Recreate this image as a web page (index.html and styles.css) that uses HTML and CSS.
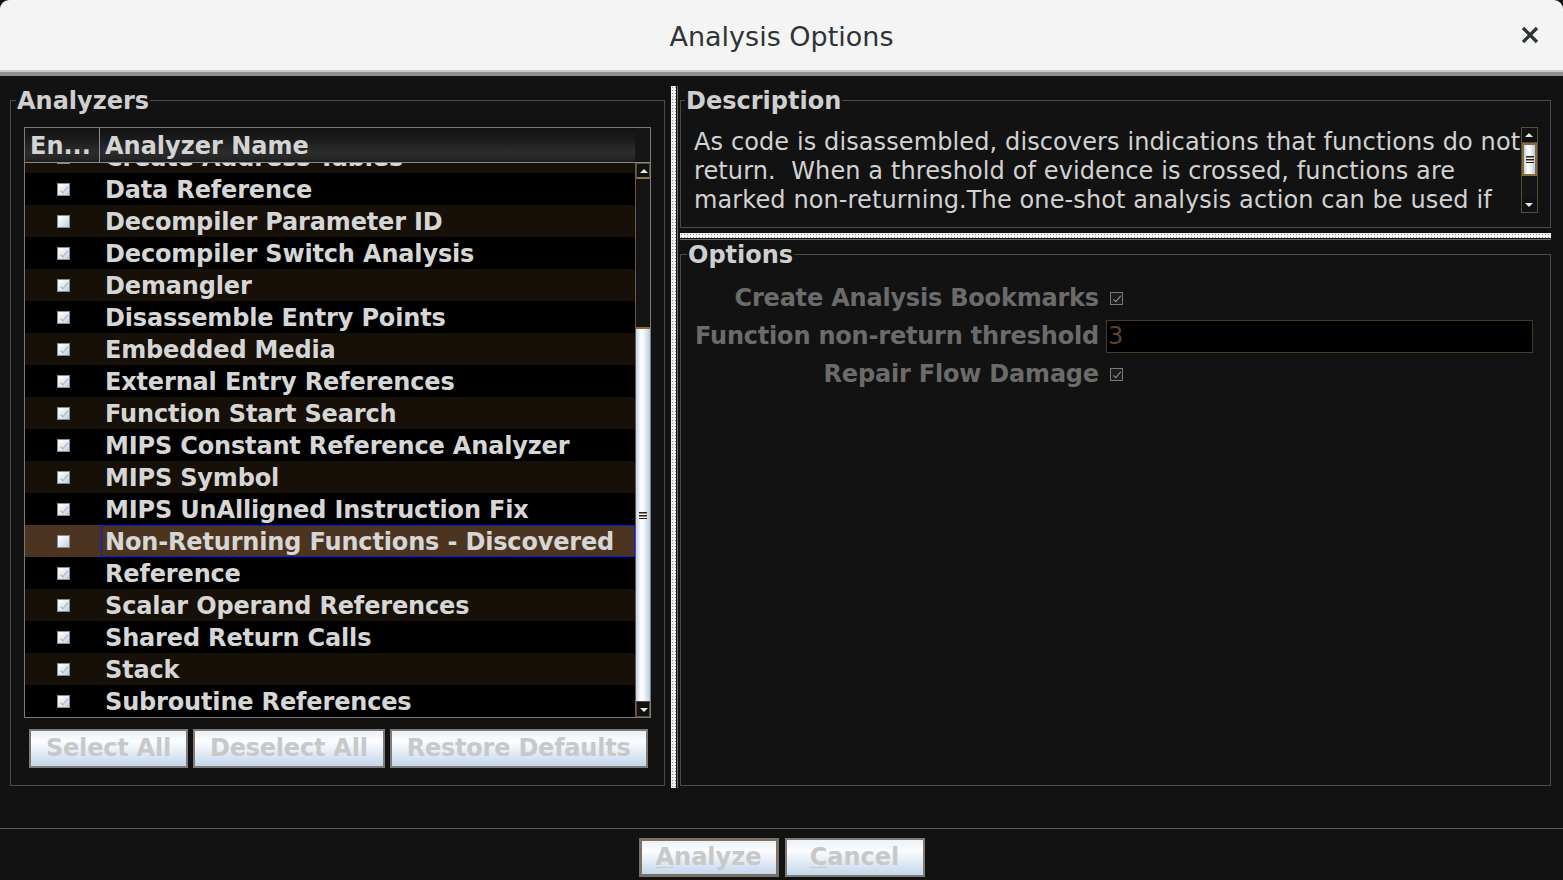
FILE: index.html
```html
<!DOCTYPE html>
<html lang="en">
<head>
<meta charset="utf-8">
<title>Analysis Options</title>
<link rel="stylesheet" href="styles.css">
</head>
<body>
<div class="dialog">
  <header class="titlebar">
    <span></span>
    <h1 class="title">Analysis Options</h1>
    <button class="close" aria-label="Close">
      <svg width="18" height="18" viewBox="0 0 18 18"><path d="M2 2 L16 16 M16 2 L2 16" stroke="#2e3436" stroke-width="3.2" fill="none"/></svg>
    </button>
  </header>

  <main class="content">
    <fieldset class="group analyzers">
      <legend>Analyzers</legend>
      <div class="table">
        <div class="thead">
          <div class="th th-en">En...</div>
          <div class="th th-name">Analyzer Name</div>
          <div class="th-corner"></div>
        </div>
        <div class="tbody">
          <div class="viewport">
            <div class="rows">
              <div class="row odd"><span class="cell-cb"><i class="cb on"></i></span><span class="cell-name">Create Address Tables</span></div>
              <div class="row"><span class="cell-cb"><i class="cb on"></i></span><span class="cell-name">Data Reference</span></div>
              <div class="row odd"><span class="cell-cb"><i class="cb"></i></span><span class="cell-name">Decompiler Parameter ID</span></div>
              <div class="row"><span class="cell-cb"><i class="cb on"></i></span><span class="cell-name">Decompiler Switch Analysis</span></div>
              <div class="row odd"><span class="cell-cb"><i class="cb on"></i></span><span class="cell-name">Demangler</span></div>
              <div class="row"><span class="cell-cb"><i class="cb on"></i></span><span class="cell-name">Disassemble Entry Points</span></div>
              <div class="row odd"><span class="cell-cb"><i class="cb on"></i></span><span class="cell-name">Embedded Media</span></div>
              <div class="row"><span class="cell-cb"><i class="cb on"></i></span><span class="cell-name">External Entry References</span></div>
              <div class="row odd"><span class="cell-cb"><i class="cb on"></i></span><span class="cell-name">Function Start Search</span></div>
              <div class="row"><span class="cell-cb"><i class="cb on"></i></span><span class="cell-name">MIPS Constant Reference Analyzer</span></div>
              <div class="row odd"><span class="cell-cb"><i class="cb on"></i></span><span class="cell-name">MIPS Symbol</span></div>
              <div class="row"><span class="cell-cb"><i class="cb on"></i></span><span class="cell-name">MIPS UnAlligned Instruction Fix</span></div>
              <div class="row selected"><span class="cell-cb"><i class="cb"></i></span><span class="cell-name">Non-Returning Functions - Discovered</span></div>
              <div class="row"><span class="cell-cb"><i class="cb on"></i></span><span class="cell-name">Reference</span></div>
              <div class="row odd"><span class="cell-cb"><i class="cb on"></i></span><span class="cell-name">Scalar Operand References</span></div>
              <div class="row"><span class="cell-cb"><i class="cb on"></i></span><span class="cell-name">Shared Return Calls</span></div>
              <div class="row odd"><span class="cell-cb"><i class="cb on"></i></span><span class="cell-name">Stack</span></div>
              <div class="row"><span class="cell-cb"><i class="cb on"></i></span><span class="cell-name">Subroutine References</span></div>
            </div>
          </div>
          <div class="vscroll">
            <div class="sb-btn up"></div>
            <div class="sb-track"><div class="sb-thumb"><span class="grip"></span></div></div>
            <div class="sb-btn down"></div>
          </div>
        </div>
      </div>
      <div class="btn-row">
        <button class="btn">Select All</button>
        <button class="btn">Deselect All</button>
        <button class="btn">Restore Defaults</button>
      </div>
    </fieldset>

    <div class="vsplit"><span class="dots"></span><span class="edge"></span></div>

    <div class="right">
      <fieldset class="group desc">
        <legend>Description</legend>
        <div class="textarea">
          <div class="desc-text">As code is disassembled, discovers indications that functions do not
return.  When a threshold of evidence is crossed, functions are
marked non-returning.The one-shot analysis action can be used if</div>
          <div class="vscroll small">
            <div class="sb-btn up"></div>
            <div class="sb-track"><div class="sb-thumb"><span class="grip"></span></div></div>
            <div class="sb-btn down"></div>
          </div>
        </div>
      </fieldset>

      <div class="hsplit"><span class="dots"></span><span class="edge"></span></div>

      <fieldset class="group options">
        <legend>Options</legend>
        <div class="opt-grid">
          <label class="opt-label">Create Analysis Bookmarks</label>
          <div class="opt-val"><i class="ocb"></i></div>
          <label class="opt-label">Function non-return threshold</label>
          <div class="opt-val"><div class="field">3</div></div>
          <label class="opt-label">Repair Flow Damage</label>
          <div class="opt-val"><i class="ocb"></i></div>
        </div>
      </fieldset>
    </div>
  </main>

  <footer class="footer">
    <button class="btn big default"><u>A</u>nalyze</button>
    <button class="btn big"><u>C</u>ancel</button>
  </footer>
</div>
</body>
</html>
```

FILE: styles.css
```css
* { box-sizing: border-box; }

html, body {
  margin: 0;
  padding: 0;
  background: #121212;
  width: 1563px;
  height: 880px;
  overflow: hidden;
  font-family: "DejaVu Sans", "Liberation Sans", sans-serif;
}

.dialog {
  display: flex;
  flex-direction: column;
  height: 880px;
}

/* ---------- title bar ---------- */
.titlebar {
  height: 76px;
  flex: none;
  background: #f4f4f4;
  border-radius: 9px 9px 0 0;
  border-bottom: 4px solid #8f8f8f;
  box-shadow: inset 0 -2px 0 #c9c9c9;
  display: grid;
  grid-template-columns: 1fr auto 1fr;
  align-items: center;
}
.title {
  margin: 0;
  font-size: 27px;
  font-weight: normal;
  color: #2e3436;
  line-height: 32px;
  padding-top: 2px;
}
.close {
  justify-self: end;
  margin-right: 24px;
  margin-bottom: 2px;
  width: 18px;
  height: 18px;
  padding: 0;
  border: 0;
  background: none;
  display: flex;
}

/* ---------- content ---------- */
.content {
  flex: 1;
  display: flex;
  padding: 10px 12px 0 10px;
  min-height: 0;
}

.group {
  margin: 0;
  min-width: 0;
  border: 1px solid #4a4a4a;
  border-radius: 0;
}
.group legend {
  padding: 3px 1px 1px 1px;
  margin-left: -8px;
  font-size: 24px;
  font-weight: bold;
  line-height: 24px;
  color: #cfcfcf;
}

.analyzers {
  width: 655px;
  height: 700px;
  padding: 13px 13px 17px 13px;
  display: flex;
  flex-direction: column;
}

/* table */
.table {
  width: 627px;
  border: 1px solid #7a7a7a;
  background: #000;
  display: flex;
  flex-direction: column;
}
.thead {
  height: 35px;
  display: grid;
  grid-template-columns: 75px 1fr 15px;
  border-bottom: 1px solid #8a8a8a;
  background: linear-gradient(#121212 0%, #1c1c1c 35%, #2c2c2c 70%, #262626 90%, #1a1a1a 100%);
}
.th {
  font-size: 24px;
  font-weight: bold;
  color: #d4d4d4;
  line-height: 32px;
  padding-top: 2px;
  padding-left: 5px;
  white-space: nowrap;
  overflow: hidden;
}
.th-en {
  border-right: 1px solid #8a8a8a;
}
.th-corner {
  background: #151515;
}

.tbody {
  height: 554px;
  display: flex;
}
.viewport {
  flex: 1;
  overflow: hidden;
}
.rows {
  margin-top: -22px;
}
.row {
  height: 32px;
  display: flex;
  background: #000;
}
.row.odd {
  background: #171008;
}
.row.selected {
  background: #4b3521;
}
.cell-cb {
  width: 76px;
  flex: none;
  display: flex;
  align-items: center;
  justify-content: center;
  padding-left: 1px;
}
.cell-name {
  flex: 1;
  font-size: 24px;
  font-weight: bold;
  letter-spacing: -0.16px;
  color: #d6d6d6;
  line-height: 28px;
  padding-top: 2px;
  padding-left: 3px;
  border: 1px solid transparent;
  white-space: nowrap;
}
.row.selected .cell-name {
  border-color: #1010ff;
}

/* table checkboxes */
.cb {
  display: block;
  width: 13px;
  height: 13px;
  border: 1px solid #8c8c8c;
  background: linear-gradient(135deg, #ffffff 0%, #e8eef6 45%, #b9cde2 100%);
  position: relative;
}
.cb.on::after {
  content: "";
  position: absolute;
  left: 4px;
  top: 1px;
  width: 3px;
  height: 7px;
  border-right: 1px solid #a9b2bc;
  border-bottom: 1px solid #a9b2bc;
  transform: rotate(40deg);
}

/* scrollbar */
.vscroll {
  width: 15px;
  flex: none;
  display: flex;
  flex-direction: column;
  background: #151515;
  border-left: 1px solid #6b5a42;
}
.sb-btn {
  height: 16px;
  flex: none;
  background: #111;
  border: 1px solid #5a4c38;
  position: relative;
}
.sb-btn.up { border-bottom: 2px solid #8a7250; }
.sb-btn::after {
  content: "";
  position: absolute;
  left: 3px;
  width: 0;
  height: 0;
  border-left: 4px solid transparent;
  border-right: 4px solid transparent;
}
.sb-btn.up::after {
  top: 5px;
  border-bottom: 4px solid #e6e6e6;
}
.sb-btn.down::after {
  top: 6px;
  border-top: 4px solid #e6e6e6;
}
.sb-track {
  flex: 1;
  display: flex;
  flex-direction: column;
  justify-content: flex-end;
  background: #141414;
}
.sb-thumb {
  height: 374px;
  border-top: 2px solid #8a6b35;
  background: linear-gradient(to right, #bfd1e4 0%, #ffffff 35%, #eef3f8 60%, #b7cbe0 100%);
  display: flex;
  align-items: center;
  justify-content: center;
}
.grip {
  display: block;
  width: 8px;
  height: 7px;
  background: repeating-linear-gradient(#222 0 1px, #a08850 1px 2px, transparent 2px 3px);
}

/* buttons */
.btn-row {
  display: flex;
  gap: 5px;
  margin-top: 11px;
  padding-left: 5px;
}
.btn {
  height: 39px;
  padding: 0 15px;
  font-family: "DejaVu Sans", sans-serif;
  font-size: 24px;
  font-weight: bold;
  letter-spacing: -0.22px;
  color: #c8c8c8;
  border: 2px solid #7e7b76;
  background: linear-gradient(#eaf1f8 0%, #fbfdff 30%, #e4edf6 60%, #c3d7eb 100%);
  line-height: 33px;
  white-space: nowrap;
}

/* splitters */
.vsplit {
  width: 15px;
  flex: none;
  height: 702px;
  display: flex;
  padding-left: 6px;
  gap: 1px;
}
.vsplit .dots {
  width: 5px;
  background-color: #f2f2f2;
  background-image: radial-gradient(#8a8a8a 0.8px, transparent 1px);
  background-size: 3px 3px;
}
.vsplit .edge {
  width: 1px;
  background: #6c6a64;
}

.right {
  flex: 1;
  display: flex;
  flex-direction: column;
  min-width: 0;
}

.desc {
  height: 142px;
  padding: 13px 12px 13px 12px;
}
.textarea {
  display: flex;
  height: 86px;
}
.desc-text {
  flex: 1;
  font-size: 24px;
  letter-spacing: 0.11px;
  line-height: 29px;
  color: #d2d2d2;
  white-space: pre;
  overflow: hidden;
  padding-left: 1px;
  padding-top: 1px;
}
.vscroll.small {
  width: 17px;
  border: 1px solid #5a4c38;
}
.vscroll.small .sb-btn { height: 15px; border: 0; }
.vscroll.small .sb-btn.up { border-bottom: 1px solid #5a4c38; }
.vscroll.small .sb-track { justify-content: flex-start; }
.vscroll.small .sb-thumb {
  height: 33px;
  border: 2px solid #8a6b35;
}

.hsplit {
  height: 12px;
  flex: none;
  display: flex;
  flex-direction: column;
  padding-top: 5px;
  gap: 1px;
}
.hsplit .dots {
  height: 5px;
  background-color: #f2f2f2;
  background-image: radial-gradient(#8a8a8a 0.8px, transparent 1px);
  background-size: 3px 3px;
}
.hsplit .edge {
  height: 1px;
  background: #6c6a64;
}

.options {
  height: 546px;
  padding: 11px 17px 10px 14px;
}
.opt-grid {
  display: grid;
  grid-template-columns: auto 1fr;
  grid-auto-rows: 38px;
  column-gap: 7px;
  align-items: center;
}
.opt-label {
  font-size: 24px;
  font-weight: bold;
  letter-spacing: -0.2px;
  color: #6b6b6b;
  text-align: right;
  white-space: nowrap;
}
.opt-val {
  display: flex;
  align-items: center;
}
.ocb {
  display: block;
  width: 13px;
  height: 13px;
  margin-left: 4px;
  border: 1px solid #7a7a7a;
  background: #1c1c1c;
  position: relative;
}
.ocb::after {
  content: "";
  position: absolute;
  left: 4px;
  top: 1px;
  width: 3px;
  height: 7px;
  border-right: 1px solid #9a9a9a;
  border-bottom: 1px solid #9a9a9a;
  transform: rotate(40deg);
}
.field {
  width: 100%;
  height: 33px;
  background: #000;
  border: 1px solid #4a3a28;
  color: #5e4329;
  font-size: 24px;
  line-height: 31px;
  padding-left: 1px;
}

/* ---------- footer ---------- */
.footer {
  height: 52px;
  flex: none;
  border-top: 1px solid #5a5a5a;
  display: flex;
  justify-content: center;
  align-items: flex-start;
  gap: 6px;
  padding-top: 9px;
}
.btn.big {
  width: 140px;
  padding: 0;
  letter-spacing: 0;
}
.btn.default {
  border: 3px solid #7b7063;
}
.btn u {
  text-decoration-thickness: 1px;
  text-underline-offset: 2px;
}
```
